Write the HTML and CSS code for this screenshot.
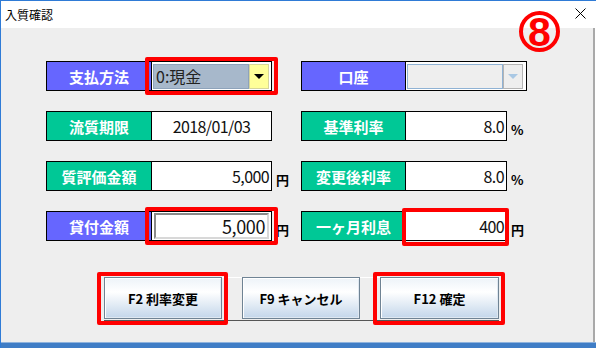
FILE: index.html
```html
<!DOCTYPE html>
<html lang="ja">
<head>
    <meta charset="UTF-8">
    <title>入質確認</title>
    <link rel="stylesheet" href="styles.css">
</head>
<body>
    <div class="window">
        <div class="title-bar">
            <span class="title">入質確認</span>
            <svg class="close" width="11" height="11" viewBox="0 0 11 11">
                <path d="M0.5 0.5 L10.5 10.5 M10.5 0.5 L0.5 10.5" stroke="#000" stroke-width="1" fill="none"/>
            </svg>
        </div>
        <div class="step">8</div>

        <div class="content">
            <div class="row">
                <div class="field left">
                    <div class="box">
                        <div class="label blue">支払方法</div>
                        <div class="value mark mark-combo">
                            <div class="combo">
                                <span class="combo-text">0:現金</span>
                                <span class="combo-btn"><span class="arrow"></span></span>
                            </div>
                        </div>
                    </div>
                </div>
                <div class="field">
                    <div class="box">
                        <div class="label blue">口座</div>
                        <div class="value wide">
                            <div class="combo disabled">
                                <span class="combo-text"></span>
                                <span class="combo-btn"><span class="arrow"></span></span>
                            </div>
                        </div>
                    </div>
                </div>
            </div>

            <div class="row">
                <div class="field left">
                    <div class="box">
                        <div class="label green">流質期限</div>
                        <div class="value center">2018/01/03</div>
                    </div>
                </div>
                <div class="field">
                    <div class="box">
                        <div class="label green">基準利率</div>
                        <div class="value num">8.0</div>
                    </div>
                    <span class="unit">%</span>
                </div>
            </div>

            <div class="row">
                <div class="field left">
                    <div class="box">
                        <div class="label green">質評価金額</div>
                        <div class="value num">5,000</div>
                    </div>
                    <span class="unit">円</span>
                </div>
                <div class="field">
                    <div class="box">
                        <div class="label green">変更後利率</div>
                        <div class="value num">8.0</div>
                    </div>
                    <span class="unit">%</span>
                </div>
            </div>

            <div class="row">
                <div class="field left">
                    <div class="box">
                        <div class="label blue">貸付金額</div>
                        <div class="value mark mark-combo">
                            <div class="input">5,000</div>
                        </div>
                    </div>
                    <span class="unit">円</span>
                </div>
                <div class="field">
                    <div class="box">
                        <div class="label green">一ヶ月利息</div>
                        <div class="value num mark mark-interest">400</div>
                    </div>
                    <span class="unit">円</span>
                </div>
            </div>

            <div class="actions">
                <button class="btn mark mark-btn">F2 利率変更</button>
                <button class="btn">F9 キャンセル</button>
                <button class="btn mark mark-btn">F12 確定</button>
            </div>
        </div>
        <div class="bottom-bar"></div>
    </div>
</body>
</html>
```

FILE: styles.css
```css
body{
  margin:0;
  font-family:"Noto Sans CJK JP", "Noto Sans", sans-serif;
}
.window{
  position:relative;
  width:596px;
  height:348px;
  box-sizing:border-box;
  border-top:1px solid #2f7bd6;
  border-left:1px solid #2f7bd6;
  background:#fff;
  display:flex;
  flex-direction:column;
}
.title-bar{
  height:27px;
  display:flex;
  align-items:center;
  justify-content:space-between;
  padding:0 10px 0 4px;
  background:#fff;
}
.title{
  font-size:12px;
  color:#000;
}
.close{
  margin-top:-2px;
}
.step{
  position:absolute;
  left:518px;
  top:10px;
  width:41px;
  height:41px;
  box-sizing:border-box;
  border:4px solid #ff0000;
  border-radius:50%;
  color:#ff0000;
  font-family:"Liberation Sans", Arial, sans-serif;
  font-weight:bold;
  font-size:41px;
  line-height:35px;
  text-align:center;
}
.content{
  flex:1;
  background:#eeeeee;
  border-right:2px solid #a9a9a9;
  margin-right:1px;
  padding:33px 0 0 45px;
}
.bottom-bar{
  height:5px;
  background:#3f7dc6;
  border-top:1px solid #8fb3dd;
}
.row{
  display:flex;
  gap:5px;
  margin-bottom:20px;
}
.field{
  display:flex;
  align-items:flex-end;
}
.field.left{
  width:250px;
}
.box{
  display:flex;
  height:30px;
  box-sizing:border-box;
  border:1px solid #000;
}
.label{
  width:104px;
  border-right:1px solid #000;
  color:#fff;
  font-weight:bold;
  font-size:15px;
  display:flex;
  align-items:center;
  justify-content:center;
}
.field:not(.left) .label{
  width:103px;
}
.blue{
  background:#6666ff;
}
.green{
  background:#00c896;
}
.value{
  width:119px;
  background:#fff;
  display:flex;
  align-items:center;
  font-size:16px;
  letter-spacing:-0.6px;
  color:#111;
  box-sizing:border-box;
}
.field:not(.left) .value{
  width:100px;
}
.field:not(.left) .value.wide{
  width:120px;
}
.value.center{
  justify-content:center;
}
.value.num{
  justify-content:flex-end;
  padding-right:2px;
}
.unit{
  font-size:13px;
  font-weight:bold;
  line-height:1;
  padding-left:4px;
  margin-bottom:5px;
}
.mark{
  position:relative;
}
.mark::after{
  content:"";
  position:absolute;
  border:4px solid #ff0000;
  border-radius:2px;
  pointer-events:none;
}
.mark-combo::after{
  inset:-5px -7px -5px -7px;
}
.mark-interest::after{
  inset:-4px -3px -6px -4px;
}
.mark-btn::after{
  inset:-6px -7px -7px -8px;
}
.combo{
  display:flex;
  margin:1px 2px 1px 1px;
  height:25px;
  flex:1;
}
.combo-text{
  flex:1;
  background:#a7b8cb;
  border:1px solid #8ea3bb;
  font-size:16px;
  letter-spacing:0;
  line-height:23px;
  padding-left:2px;
  color:#222;
}
.combo-btn{
  width:18px;
  background:#ffff99;
  border:1px solid #d6d69a;
  display:flex;
  align-items:center;
  justify-content:center;
}
.arrow{
  width:0;
  height:0;
  border-left:5px solid transparent;
  border-right:5px solid transparent;
  border-top:5px solid #000;
}
.combo.disabled{
  margin:1px 3px 1px 1px;
}
.combo.disabled .combo-text{
  background:#eeeeee;
  border:1px solid #8fb2d4;
}
.combo.disabled .combo-btn{
  background:#eeeeee;
  border:1px solid #b4b4b4;
}
.combo.disabled .arrow{
  border-top-color:#a9c8e4;
}
.input{
  flex:1;
  height:26px;
  margin:0 2px;
  box-sizing:border-box;
  border:2px solid;
  border-color:#8a8a8a #d8d8d8 #d8d8d8 #8a8a8a;
  background:#fff;
  text-align:right;
  font-size:18px;
  line-height:22px;
  padding-right:2px;
  letter-spacing:-0.4px;
}
.actions{
  display:flex;
  gap:20px;
  width:395px;
  margin:36px 0 0 58px;
  border-top:1px solid #fff;
  border-bottom:1px solid #555;
  height:42px;
}
.btn{
  width:118px;
  height:42px;
  margin-top:-1px;
  border:1px solid #6f8394;
  box-shadow:inset 1px 1px 0 #fff, inset -1px -1px 0 #dfe8f1;
  background:linear-gradient(#edf3f8, #ffffff 35%, #c3d6ea);
  font-family:"Noto Sans CJK JP", sans-serif;
  font-size:13px;
  font-weight:bold;
  color:#000;
  padding:0;
}
.btn:last-child{
  width:119px;
}
```
